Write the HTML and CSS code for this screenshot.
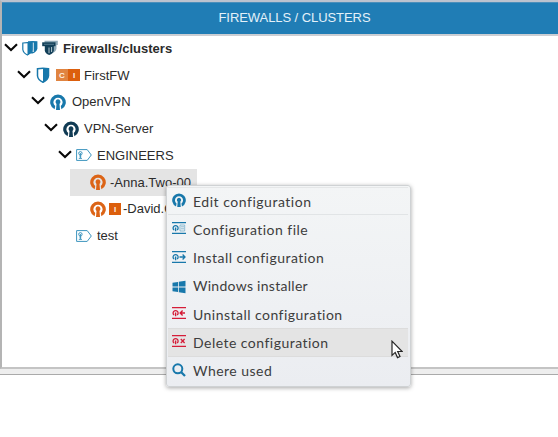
FILE: index.html
```html
<!DOCTYPE html>
<html lang="en">
<head>
<meta charset="utf-8">
<title>Firewalls / Clusters</title>
<link rel="stylesheet" href="styles.css">
</head>
<body>
<svg class="defs" width="0" height="0">
  <symbol id="chevron" viewBox="0 0 14 9"><path d="M1 1.2 7 7 13 1.2" fill="none" stroke="#080808" stroke-width="2.1"/></symbol>
  <symbol id="vpn" viewBox="0 0 16 16"><path d="M4.6 15.3A7.8 7.8 0 1 1 11.4 15.3L10.8 12A4.6 4.6 0 1 0 5.2 12Z" fill="currentColor"/><path d="M8 5.3a2.6 2.6 0 0 1 1.5 4.6L10 16H6L6.5 9.9A2.6 2.6 0 0 1 8 5.3Z" fill="currentColor"/></symbol>
  <symbol id="shield" viewBox="0 0 14 16"><path d="M1.5 1.7Q7 .7 12.5 1.7V9Q12 13 7 15.2 2 13 1.5 9Z" fill="#fff" stroke="#1878ab" stroke-width="1.5"/><path d="M7 1V15.3Q12.2 13 12.5 9V1.7Q10 1 7 1Z" fill="#1878ab"/></symbol>
  <symbol id="tag" viewBox="0 0 16 12"><path d="M.6.6H11.2L15.3 6 11.2 11.4H.6Z" fill="#fff" stroke="#3c94be"/><circle cx="4.4" cy="4.3" r="1.7" fill="none" stroke="#3c94be"/><path d="M4.4 4V9.2M2.8 9.3H6M3.4 7H5.4" stroke="#3c94be"/></symbol>
  <symbol id="bars" viewBox="0 0 14 13"><path d="M0 1.1H14M0 11.9H14" stroke="currentColor" stroke-width="1.3"/><path d="M2.1 8.6A2.5 2.5 0 1 1 5.1 8.6" fill="none" stroke="currentColor" stroke-width="1.3"/><path d="M3.6 6V9.8" stroke="currentColor" stroke-width="1.4"/></symbol>
</svg>
<main class="panel">
  <header class="title">FIREWALLS / CLUSTERS</header>
  <ul class="tree">
    <li class="node root"><svg class="chev"><use href="#chevron"/></svg>
      <svg class="ic" viewBox="0 0 16 16"><path d="M6 1.2Q10.5.6 15.4 1.2V8.5Q14.6 12 10.5 13.5H6Z" fill="#1878ab"/><path d="M11.2 2.6V12" stroke="#fff" stroke-width="1"/><path d="M.8 3Q5.4 2.3 9.9 3V9.5Q9.3 13.2 5.4 15 1.4 13.2.8 9.5Z" fill="#fff" stroke="#1878ab" stroke-width="1.2"/><path d="M5.5 2.6V15Q9.3 13.2 9.9 9.5V3Q8 2.6 5.5 2.6Z" fill="#1878ab"/></svg>
      <svg class="ic cluster" viewBox="0 0 16 16"><path d="M2.5.8H15.8V5H14.5V8.5Q14 11.5 10.5 13V5H2.5Z" fill="#8fa9b7"/><path d="M.2 2.3H13.5V6.2H.2Z" fill="#123f58"/><path d="M2 4.3H12" stroke="#52798e"/><path d="M2.8 5.7H11.8V10.5Q11.3 13.6 7.2 15 3.2 13.6 2.8 10.5Z" fill="#123f58"/><path d="M7 7.5V13.2M9.6 7V12" stroke="#b5c8d1"/></svg>
      <span>Firewalls/clusters</span></li>
    <li class="node firewall"><svg class="chev"><use href="#chevron"/></svg><svg class="ic shield"><use href="#shield"/></svg><span class="badges"><b class="badge compile">C</b><b class="badge">I</b></span><span>FirstFW</span></li>
    <li class="node service blue"><svg class="chev"><use href="#chevron"/></svg><svg class="ic"><use href="#vpn"/></svg><span>OpenVPN</span></li>
    <li class="node server navy"><svg class="chev"><use href="#chevron"/></svg><svg class="ic"><use href="#vpn"/></svg><span>VPN-Server</span></li>
    <li class="node group"><svg class="chev"><use href="#chevron"/></svg><svg class="ic tag"><use href="#tag"/></svg><span>ENGINEERS</span></li>
    <li class="node client selected"><svg class="ic"><use href="#vpn"/></svg><span>-Anna.Two-00</span></li>
    <li class="node client"><svg class="ic"><use href="#vpn"/></svg><b class="badge">I</b><span>-David.One-00</span></li>
    <li class="node leaf"><svg class="ic tag"><use href="#tag"/></svg><span>test</span></li>
  </ul>
</main>
<div class="splitter"></div>
<ul class="menu">
  <li class="item first"><svg class="mi"><use href="#vpn"/></svg><span class="tight">Edit configuration</span></li>
  <li class="item"><svg class="mi" viewBox="0 0 14 13"><use href="#bars"/><path d="M8 3.5H12.7V9.5H8ZM9 5.3H12M9 7.3H12" fill="none" stroke="#76aeca" stroke-width=".8"/></svg><span>Configuration file</span></li>
  <li class="item"><svg class="mi" viewBox="0 0 14 13"><use href="#bars"/><path d="M7.5 6.5H13M10.6 4 13 6.5 10.6 9" fill="none" stroke="currentColor" stroke-width="1.3"/></svg><span>Install configuration</span></li>
  <li class="item"><svg class="mi win" viewBox="0 0 14 14"><path d="M.5 2.7 6 1.9V6.6H.5ZM6.8 1.8 13.5.8V6.6H6.8ZM.5 7.4H6V12.1L.5 11.3ZM6.8 7.4H13.5V13.2L6.8 12.2Z" fill="currentColor"/></svg><span class="narrow">Windows installer</span></li>
  <li class="item red"><svg class="mi" viewBox="0 0 14 13"><use href="#bars"/><path d="M13 6.5H8M10.6 4 8.2 6.5 10.6 9" fill="none" stroke="currentColor" stroke-width="1.4"/></svg><span>Uninstall configuration</span></li>
  <li class="item red hover"><svg class="mi" viewBox="0 0 14 13"><use href="#bars"/><path d="M8.8 4.5 12.6 8.5M12.6 4.5 8.8 8.5" stroke="currentColor" stroke-width="1.3"/></svg><span>Delete configuration</span></li>
  <li class="item"><svg class="mi" viewBox="0 0 14 14"><circle cx="5.8" cy="5.8" r="4.5" fill="none" stroke="currentColor" stroke-width="2"/><path d="M9 9 13 13" stroke="currentColor" stroke-width="2.3"/></svg><span>Where used</span></li>
</ul>
<svg class="cursor" viewBox="0 0 12 19"><path d="M1 1.2V15.4L4.2 12.4 6.5 17.6 9 16.5 6.7 11.5H11.2Z" fill="#fff" stroke="#252525" stroke-width="1.2"/></svg>
</body>
</html>
```
FILE: styles.css
```css
* { box-sizing: border-box; }
body {
  margin: 0;
  height: 437px;
  overflow: hidden;
  background: #fff;
  color: #2b2b2b;
  font: 13px "Liberation Sans", Arial, sans-serif;
}
ul { list-style: none; margin: 0; padding: 0; }
.defs { position: absolute; }
.panel {
  height: 369px;
  border-top: 2px solid #bcc3cf;
  border-left: 2px solid #b4b4b4;
  border-bottom: 2px solid #c4c4c4;
}
.title {
  height: 34px;
  padding-left: 29px;
  border-top: 1px solid #4b8fbb;
  border-bottom: 2px solid #cbced3;
  background: #207db5;
  color: #e4f1f9;
  line-height: 30px;
  letter-spacing: -.07px;
  text-align: center;
}
.tree { margin: -1px 0 0 -1px; }
.node {
  display: flex;
  align-items: center;
  height: 26.75px;
  white-space: nowrap;
}
.chev { flex: none; width: 14px; height: 9px; margin: -2px 5px 0 0; }
.ic { flex: none; width: 16px; height: 16px; margin-right: 5px; }
.root { padding-left: 3px; font-weight: bold; }
.root .chev { margin-right: 4px; }
.root .ic { margin-right: 4px; }
.root .cluster { margin-right: 5px; }
.firewall { padding-left: 16px; }
.firewall .shield { width: 14px; margin-right: 6px; }
.service { padding-left: 30px; }
.service .ic { margin-right: 6px; }
.server { padding-left: 43px; }
.group { padding-left: 57px; }
.group .chev { margin-right: 4px; }
.ic.tag { height: 12px; }
.leaf { padding-left: 75px; }
.client { width: 127px; margin-left: 69px; padding-left: 20px; color: #dc6416; }
.client .ic { margin-right: 4px; }
.client .badge { margin: 0 2px 0 -1px; }
.client span { color: #2b2b2b; }
.selected { background: #e4e4e4; }
.blue { color: #1878ab; }
.navy { color: #103b54; }
.blue span, .navy span { color: #2b2b2b; }
.badges { display: flex; margin-right: 4px; }
.badge {
  flex: none;
  width: 12px;
  height: 12px;
  background: #dc5f0d;
  color: #fff0e2;
  font-size: 8px;
  line-height: 13px;
  text-align: center;
}
.compile { background: #e08441; }
.splitter {
  height: 6px;
  border-bottom: 1px solid #aaa;
  background: #eee;
}
.menu {
  position: absolute;
  left: 166px;
  top: 185px;
  width: 245px;
  height: 202px;
  padding: 1px 2px 0 1px;
  border: 1px solid #cfd2d4;
  border-radius: 3px;
  background: linear-gradient(#f3f5f6, #ebedf1);
  box-shadow: 0 1px 4px rgba(0, 0, 0, .35);
  font: 14px Lato, "Open Sans", sans-serif;
}
.item {
  display: flex;
  align-items: center;
  height: 28.25px;
  padding-left: 4px;
  color: #1878ab;
  white-space: nowrap;
}
.item span { color: #3d3d3d; letter-spacing: .47px; }
.item .tight { letter-spacing: .52px; }
.item .narrow { letter-spacing: .28px; }
.first { border-top: 1px solid #e5e7e8; border-bottom: 1px solid #e1e4e6; }
.mi { flex: none; width: 14px; height: 14px; margin: -2px 7px 0 0; }
.win { margin-top: 2px; }
.red { color: #d51d38; }
.hover { background: #e4e4e4; border-top: 1px solid #dcdcdc; border-bottom: 1px solid #dcdcdc; }
.cursor { position: absolute; left: 391px; top: 340px; width: 12px; height: 19px; }
```
